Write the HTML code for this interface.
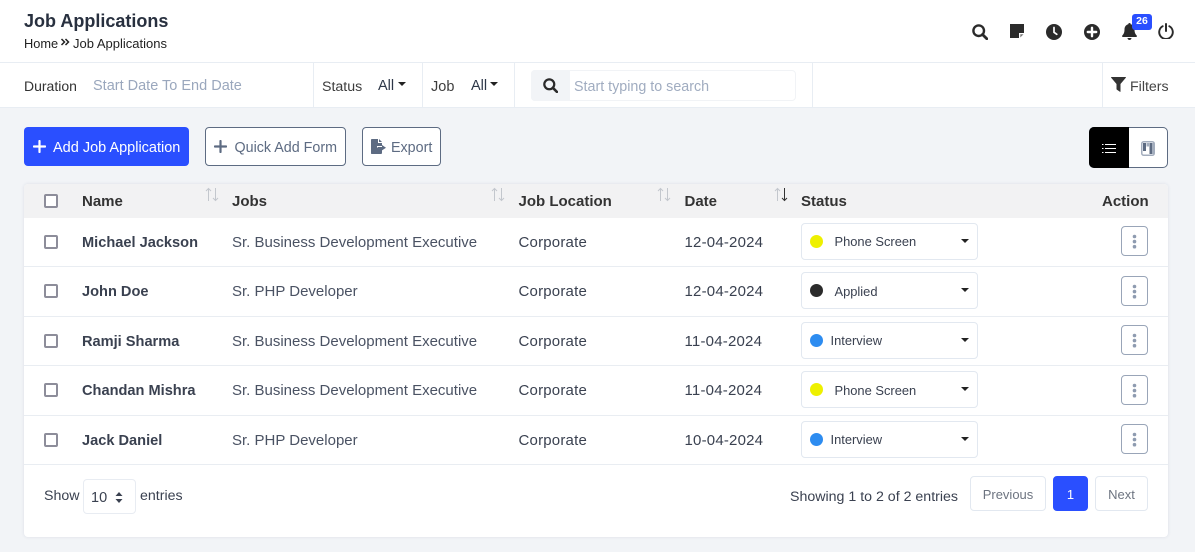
<!DOCTYPE html>
<html><head><meta charset="utf-8"><style>
*{box-sizing:border-box}
html,body{margin:0;padding:0}
body{width:1195px;height:552px;position:relative;overflow:hidden;background:#f2f4f7;font-family:"Liberation Sans",sans-serif;font-size:14px;color:#2d3748}
.a{position:absolute;white-space:nowrap}
.t{position:absolute;white-space:nowrap;line-height:18px}
svg{position:absolute;display:block}
.cb{position:absolute;left:44px;width:14px;height:14px;border:2px solid #8d8d9a;border-radius:2px;background:#fff}
.dd{position:absolute;left:801px;width:177px;height:37px;border:1px solid #e2e8f0;border-radius:4px;background:#fff}
.dot{position:absolute;left:810px;width:13px;height:13px;border-radius:50%}
.caret{position:absolute;width:0;height:0;border-left:4.5px solid transparent;border-right:4.5px solid transparent;border-top:4.5px solid #222}
.act{position:absolute;left:1121px;width:27px;height:30px;border:1px solid #99a5b8;border-radius:4px;background:#fff}
.act svg{left:-1px;top:-1px}
.sep{position:absolute;left:24px;width:1144px;height:1px;background:#e9edf2}
.btn{position:absolute;height:39px;top:127px;border-radius:4px;border:1px solid #5d6b82;background:#fff}
.pg{position:absolute;top:476px;height:35px;border:1px solid #e2e8f0;border-radius:4px;background:#fff;color:#6d7480;font-size:13px;line-height:35px;text-align:center}
.v{position:absolute;top:63px;width:1px;height:44px;background:#e8edf3}
.h{font-weight:700;color:#333;font-size:15px;top:193px}
.n{font-weight:700;color:#3a4150;font-size:14.600px;left:82px}
.j{left:232px;color:#4a5263;font-size:15px}
.l{left:518.500px;color:#3a4150;font-size:15px;letter-spacing:.2px}
.d{left:684.500px;color:#3a4150;font-size:15px;letter-spacing:.2px}
.s{color:#3a4150;font-size:12.900px}
</style></head><body>
<div class="a" style="left:0;top:0;width:1195px;height:108px;background:#fff;border-bottom:1px solid #e8edf3"></div>
<div class="a" style="left:0;top:62px;width:1195px;height:1px;background:#e8edf3"></div>

<div class="t" style="left:24px;top:11px;font-size:18px;line-height:20px;font-weight:700;color:#28303f">Job Applications</div>
<div class="t" style="left:24px;top:35px;font-size:12.800px;color:#222">Home</div>
<svg style="left:60px;top:38px" width="10" height="9" viewBox="0 0 10 9"><path d="M1.500 1l3 3-3 3M5.500 1l3 3-3 3" fill="none" stroke="#222" stroke-width="1.500"/></svg>
<div class="t" style="left:73px;top:35px;font-size:13px;color:#222">Job Applications</div>

<!-- top icons -->
<svg style="left:972px;top:23.500px" width="16" height="16" viewBox="0 0 16 16"><circle cx="6.700" cy="6.700" r="5.300" fill="none" stroke="#2b2b2b" stroke-width="2.400"/><path d="M10.500 10.500l4.300 4.300" stroke="#2b2b2b" stroke-width="2.800" stroke-linecap="round"/></svg>
<svg style="left:1010px;top:24px" width="14" height="14" viewBox="0 0 14 14"><path d="M0 0h14v9H9v5H0z" fill="#2b2b2b"/><path d="M10.300 13.500v-3.200h3.200z" fill="#777"/></svg>
<svg style="left:1046px;top:23.500px" width="16" height="16" viewBox="0 0 16 16"><circle cx="8" cy="8" r="8" fill="#2b2b2b"/><path d="M8 3.500V8.300l2.800 2" fill="none" stroke="#fff" stroke-width="1.700" stroke-linecap="round"/></svg>
<svg style="left:1084px;top:23.500px" width="16" height="16" viewBox="0 0 16 16"><circle cx="8" cy="8" r="8" fill="#2b2b2b"/><path d="M8 3.800v8.400M3.800 8h8.400" stroke="#fff" stroke-width="2.400" stroke-linecap="round"/></svg>
<svg style="left:1122px;top:23px" width="15" height="17" viewBox="0 0 15 17"><path d="M7.500 0c-.8 0-1.200.6-1.200 1.300C3.800 1.900 2.500 4 2.500 6.500c0 3.300-1 4.700-2.200 6-.5.600-.2 1.500.6 1.500h13.200c.8 0 1.100-.9.600-1.500-1.200-1.300-2.200-2.700-2.200-6 0-2.500-1.300-4.600-3.800-5.200C8.700.6 8.300 0 7.500 0z" fill="#2b2b2b"/><path d="M5.500 15h4c0 1.100-.9 2-2 2s-2-.9-2-2z" fill="#2b2b2b"/></svg>
<div class="a" style="left:1132px;top:14px;width:20px;height:16px;background:#2a4fff;border-radius:3px;color:#fff;font-size:10.500px;font-weight:700;line-height:15px;text-align:center">26</div>
<svg style="left:1158px;top:23px" width="16" height="16" viewBox="0 0 16 16"><path d="M4.700 3.200a6.800 6.800 0 1 0 6.600 0" fill="none" stroke="#2b2b2b" stroke-width="1.900" stroke-linecap="round"/><path d="M8 1v7" stroke="#2b2b2b" stroke-width="2" stroke-linecap="round"/></svg>

<!-- filter bar -->
<div class="t" style="left:24px;top:77px;color:#333;font-size:14px">Duration</div>
<div class="t" style="left:93px;top:77px;color:#9aa7bd;font-size:14.500px">Start Date To End Date</div>
<div class="v" style="left:313px"></div>
<div class="t" style="left:322px;top:78px;color:#3d3d3d;font-size:14.200px">Status</div>
<div class="t" style="left:378px;top:77px;color:#2d3748;font-size:14.500px">All</div>
<div class="caret" style="left:398px;top:82px"></div>
<div class="v" style="left:422px"></div>
<div class="t" style="left:431px;top:78px;color:#3d3d3d;font-size:14.500px">Job</div>
<div class="t" style="left:471px;top:77px;color:#2d3748;font-size:14.500px">All</div>
<div class="caret" style="left:490px;top:82px"></div>
<div class="v" style="left:514px"></div>
<div class="a" style="left:531px;top:70px;width:265px;height:31px;border:1px solid #f1f3f6;border-radius:4px;background:#fff"></div>
<div class="a" style="left:531px;top:70px;width:39px;height:31px;background:#f2f4f7;border-radius:4px 0 0 4px"></div>
<svg style="left:543px;top:78px" width="15" height="15" viewBox="0 0 16 16"><circle cx="6.700" cy="6.700" r="5.300" fill="none" stroke="#2b2b2b" stroke-width="2.400"/><path d="M10.500 10.500l4.300 4.300" stroke="#2b2b2b" stroke-width="2.800" stroke-linecap="round"/></svg>
<div class="t" style="left:574px;top:78px;color:#a0acc0;font-size:14.300px">Start typing to search</div>
<div class="v" style="left:812px"></div>
<div class="v" style="left:1102px"></div>
<svg style="left:1111px;top:77px" width="15" height="15" viewBox="0 0 15 15"><path d="M.5 0h14q.7 0 .3.800L9.500 7v7.500q0 .5-.6.300L5.800 12.600q-.3-.2-.3-.6V7L.2.800Q-.2 0 .5 0z" fill="#333"/></svg>
<div class="t" style="left:1130px;top:78px;color:#444;font-size:14.200px">Filters</div>

<!-- buttons -->
<div class="a" style="left:24px;top:127px;width:165px;height:39px;background:#2a4fff;border-radius:4px"></div>
<svg style="left:33px;top:140px" width="13" height="13" viewBox="0 0 13 13"><path d="M6.500 1v11M1 6.500h11" stroke="#fff" stroke-width="2.200" stroke-linecap="round"/></svg>
<div class="t" style="left:53px;top:139px;color:#fff;font-size:14.500px">Add Job Application</div>
<div class="btn" style="left:205px;width:141px"></div>
<svg style="left:214px;top:140px" width="13" height="13" viewBox="0 0 13 13"><path d="M6.500 1v11M1 6.500h11" stroke="#5d6b82" stroke-width="2.200" stroke-linecap="round"/></svg>
<div class="t" style="left:234.500px;top:139px;color:#5d6b82;font-size:14.300px">Quick Add Form</div>
<div class="btn" style="left:362px;width:79px"></div>
<svg style="left:371px;top:139px" width="16" height="15" viewBox="0 0 16 15"><path d="M0 .8Q0 0 .8 0H7v4h4v3H6v1.500h5V14q0 1-1 1H.8Q0 15 0 14.200z" fill="#5d6b82"/><path d="M8 0l3 3H8zM11 6l4 2.700-4 2.700V9.500H7V8h4z" fill="#5d6b82"/></svg>
<div class="t" style="left:391px;top:139px;color:#5d6b82;font-size:14.300px">Export</div>

<div class="a" style="left:1089px;top:127px;width:79px;height:41px;background:#fff;border:1px solid #5d6b82;border-radius:5px"></div>
<div class="a" style="left:1089px;top:127px;width:40px;height:41px;background:#000;border-radius:5px 0 0 5px"></div>
<svg style="left:1102px;top:143px" width="14" height="11" viewBox="0 0 14 11"><path d="M3 1.500h11M3 5.500h11M3 9.500h11" stroke="#fff" stroke-width="1"/><path d="M0 1h1.500v1H0zM0 5h1.500v1H0zM0 9h1.500v1H0z" fill="#fff"/></svg>
<svg style="left:1141px;top:141px" width="14" height="15" viewBox="0 0 14 15"><rect x=".75" y=".75" width="12.500" height="13.500" rx="2" fill="#fff" stroke="#a3adbd" stroke-width="1.500"/><path d="M2 2h3v8H2z" fill="#5d6b82"/><path d="M5.500 2H8v3.500H5.500z" fill="#a3adbd"/><path d="M8.500 2H11v11H8.500z" fill="#5d6b82"/><path d="M11 2h1.500v11H11z" fill="#a3adbd"/></svg>

<!-- card -->
<div class="a" style="left:24px;top:184px;width:1144px;height:353px;background:#fff;border-radius:4px;box-shadow:0 0 3px rgba(120,135,160,.18)"></div>
<div class="a" style="left:24px;top:184px;width:1144px;height:34px;background:#f2f2f3;border-radius:4px 4px 0 0"></div>

<div class="cb" style="top:194px"></div>
<div class="t h" style="left:82px">Name</div>
<div class="t h" style="left:232px">Jobs</div>
<div class="t h" style="left:518.500px">Job Location</div>
<div class="t h" style="left:684.500px">Date</div>
<div class="t h" style="left:801px">Status</div>
<div class="t h" style="left:1102px">Action</div>

<svg style="left:205px;top:187px" width="14" height="15" viewBox="0 0 14 15"><path d="M3.500 14V1.500M1 4l2.500-2.500L6 4M10.500 1v12.500M8 11l2.500 2.500L13 11" fill="none" stroke="#c3c7cd" stroke-width="1"/></svg>
<svg style="left:491px;top:187px" width="14" height="15" viewBox="0 0 14 15"><path d="M3.500 14V1.500M1 4l2.500-2.500L6 4M10.500 1v12.500M8 11l2.500 2.500L13 11" fill="none" stroke="#c3c7cd" stroke-width="1"/></svg>
<svg style="left:657px;top:187px" width="14" height="15" viewBox="0 0 14 15"><path d="M3.500 14V1.500M1 4l2.500-2.500L6 4M10.500 1v12.500M8 11l2.500 2.500L13 11" fill="none" stroke="#c3c7cd" stroke-width="1"/></svg>
<svg style="left:774px;top:187px" width="14" height="15" viewBox="0 0 14 15"><path d="M3.500 14V1.500M1 4l2.500-2.500L6 4" fill="none" stroke="#c3c7cd" stroke-width="1"/><path d="M10.500 1v12.500M8 11l2.500 2.500L13 11" fill="none" stroke="#333" stroke-width="1"/></svg>

<!-- row 1 -->
<div class="cb" style="top:235px"></div>
<div class="t n" style="top:234px">Michael Jackson</div>
<div class="t j" style="top:234px">Sr. Business Development Executive</div>
<div class="t l" style="top:234px">Corporate</div>
<div class="t d" style="top:234px">12-04-2024</div>
<div class="dd" style="top:223px"></div><div class="dot" style="top:235px;background:#eef000"></div>
<div class="t s" style="left:834.500px;top:233px">Phone Screen</div>
<div class="caret" style="left:961px;top:239px"></div>
<div class="act" style="top:226px"><svg width="27" height="30"><circle cx="13.500" cy="10.500" r="1.800" fill="#8e9bb0"/><circle cx="13.500" cy="15.600" r="1.800" fill="#8e9bb0"/><circle cx="13.500" cy="20.700" r="1.800" fill="#8e9bb0"/></svg></div>
<div class="sep" style="top:266px"></div>

<!-- row 2 -->
<div class="cb" style="top:284px"></div>
<div class="t n" style="top:283px">John Doe</div>
<div class="t j" style="top:283px">Sr. PHP Developer</div>
<div class="t l" style="top:283px">Corporate</div>
<div class="t d" style="top:283px">12-04-2024</div>
<div class="dd" style="top:272px"></div><div class="dot" style="top:284px;background:#2b2b2b"></div>
<div class="t s" style="left:834.500px;top:283px">Applied</div>
<div class="caret" style="left:961px;top:288px"></div>
<div class="act" style="top:276px"><svg width="27" height="30"><circle cx="13.500" cy="10.500" r="1.800" fill="#8e9bb0"/><circle cx="13.500" cy="15.600" r="1.800" fill="#8e9bb0"/><circle cx="13.500" cy="20.700" r="1.800" fill="#8e9bb0"/></svg></div>
<div class="sep" style="top:316px"></div>

<!-- row 3 -->
<div class="cb" style="top:334px"></div>
<div class="t n" style="top:333px">Ramji Sharma</div>
<div class="t j" style="top:333px">Sr. Business Development Executive</div>
<div class="t l" style="top:333px">Corporate</div>
<div class="t d" style="top:333px">11-04-2024</div>
<div class="dd" style="top:322px"></div><div class="dot" style="top:334px;background:#2d8cf0"></div>
<div class="t s" style="left:830.500px;top:332px">Interview</div>
<div class="caret" style="left:961px;top:338px"></div>
<div class="act" style="top:325px"><svg width="27" height="30"><circle cx="13.500" cy="10.500" r="1.800" fill="#8e9bb0"/><circle cx="13.500" cy="15.600" r="1.800" fill="#8e9bb0"/><circle cx="13.500" cy="20.700" r="1.800" fill="#8e9bb0"/></svg></div>
<div class="sep" style="top:365px"></div>

<!-- row 4 -->
<div class="cb" style="top:383px"></div>
<div class="t n" style="top:382px">Chandan Mishra</div>
<div class="t j" style="top:382px">Sr. Business Development Executive</div>
<div class="t l" style="top:382px">Corporate</div>
<div class="t d" style="top:382px">11-04-2024</div>
<div class="dd" style="top:371px"></div><div class="dot" style="top:383px;background:#eef000"></div>
<div class="t s" style="left:834.500px;top:382px">Phone Screen</div>
<div class="caret" style="left:961px;top:387px"></div>
<div class="act" style="top:375px"><svg width="27" height="30"><circle cx="13.500" cy="10.500" r="1.800" fill="#8e9bb0"/><circle cx="13.500" cy="15.600" r="1.800" fill="#8e9bb0"/><circle cx="13.500" cy="20.700" r="1.800" fill="#8e9bb0"/></svg></div>
<div class="sep" style="top:415px"></div>

<!-- row 5 -->
<div class="cb" style="top:433px"></div>
<div class="t n" style="top:432px">Jack Daniel</div>
<div class="t j" style="top:432px">Sr. PHP Developer</div>
<div class="t l" style="top:432px">Corporate</div>
<div class="t d" style="top:432px">10-04-2024</div>
<div class="dd" style="top:421px"></div><div class="dot" style="top:433px;background:#2d8cf0"></div>
<div class="t s" style="left:830.500px;top:431px">Interview</div>
<div class="caret" style="left:961px;top:437px"></div>
<div class="act" style="top:424px"><svg width="27" height="30"><circle cx="13.500" cy="10.500" r="1.800" fill="#8e9bb0"/><circle cx="13.500" cy="15.600" r="1.800" fill="#8e9bb0"/><circle cx="13.500" cy="20.700" r="1.800" fill="#8e9bb0"/></svg></div>
<div class="sep" style="top:464px"></div>

<!-- footer -->
<div class="t" style="left:44px;top:487px;color:#3a4150;font-size:14.200px">Show</div>
<div class="a" style="left:83px;top:479px;width:53px;height:35px;border:1px solid #e8ecf2;border-radius:4px;background:#fff"></div>
<div class="t" style="left:91px;top:489px;color:#3a4150;font-size:14.500px">10</div>
<svg style="left:115px;top:492px" width="8" height="11" viewBox="0 0 8 11"><path d="M4 0l3.500 4H.5zM4 11L.5 7h7z" fill="#3a4150"/></svg>
<div class="t" style="left:140px;top:487px;color:#3a4150;font-size:14.200px">entries</div>
<div class="t" style="left:790px;top:488px;color:#3a4150;font-size:14.200px">Showing 1 to 2 of 2 entries</div>
<div class="pg" style="left:970px;width:76px">Previous</div>
<div class="pg" style="left:1053px;width:35px;background:#2a4fff;border-color:#2a4fff;color:#fff">1</div>
<div class="pg" style="left:1095px;width:53px">Next</div>
</body></html>
